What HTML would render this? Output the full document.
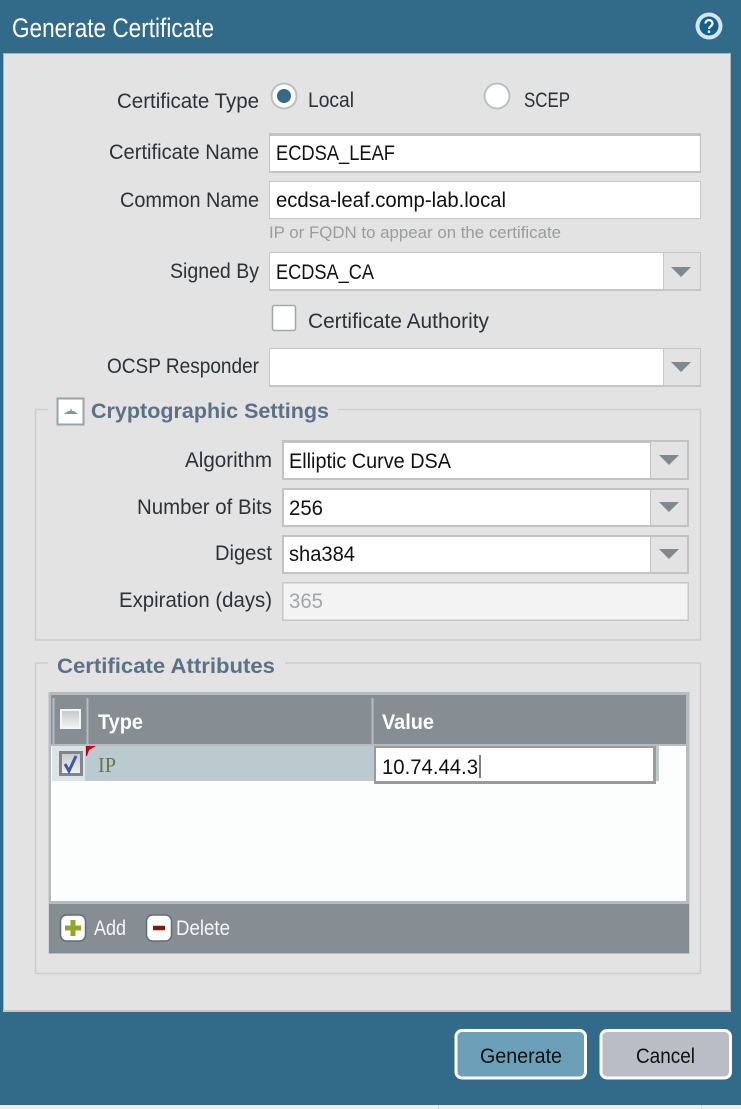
<!DOCTYPE html>
<html><head><meta charset="utf-8"><title>Generate Certificate</title>
<style>
html,body{margin:0;padding:0;width:741px;height:1109px;overflow:hidden;background:#326a89}
svg{display:block}
text{font-family:"Liberation Sans",sans-serif;font-size:21px;fill:#2c3238}
.v{fill:#111}
.h{font-weight:bold;fill:#5a7186}
</style></head><body>
<svg width="741" height="1109" viewBox="0 0 741 1109" xmlns="http://www.w3.org/2000/svg">
<defs><linearGradient id="g" x1="0" y1="0" x2="0" y2="1"><stop offset="0" stop-color="#c4c8cb"/><stop offset="1" stop-color="#f2f3f4"/></linearGradient></defs>
<rect width="741" height="1109" fill="#326a89"/>
<rect x="0" y="1105" width="741" height="4" fill="#eef0f0"/>
<path d="M438.500 1105V1109M701.500 1105V1109" stroke="#d5d8da"/>
<rect x="3" y="53" width="728" height="959" fill="#e3e3e3"/>
<path d="M3.500 1012V53.500H730.500V1012" fill="none" stroke="#a9b4ba"/>
<rect x="3" y="1010" width="728" height="2" fill="#c4c6c8"/>

<text x="12" y="37" style="font-size:27px;fill:#fff" textLength="202" lengthAdjust="spacingAndGlyphs">Generate Certificate</text>
<circle cx="709" cy="26" r="13.500" fill="#d6e4ec"/><circle cx="709" cy="26" r="9.500" fill="#14608f"/>
<path d="M705.500 23.500c0-4.500 7-4.500 7 0 0 2.800-3.500 2.800-3.500 5.500" fill="none" stroke="#fff" stroke-width="2.200"/><rect x="707.800" y="30.500" width="2.400" height="2.400" fill="#fff"/>

<text x="117" y="108" textLength="142" lengthAdjust="spacingAndGlyphs">Certificate Type</text>
<circle cx="284" cy="96" r="12.500" fill="#fff" stroke="#b9bfc3" stroke-width="2"/><circle cx="284" cy="96" r="7" fill="#326a89"/>
<text x="308" y="107" textLength="46" lengthAdjust="spacingAndGlyphs">Local</text>
<circle cx="497" cy="96" r="12.500" fill="#fff" stroke="#b9bfc3" stroke-width="2"/>
<text x="524" y="107" textLength="46" lengthAdjust="spacingAndGlyphs">SCEP</text>

<text x="109" y="159" textLength="150" lengthAdjust="spacingAndGlyphs">Certificate Name</text>
<rect x="269" y="133" width="432" height="40" fill="#c2c2c2"/><rect x="270" y="136" width="430" height="35" fill="#fff"/>
<text class="v" x="276" y="160" textLength="119" lengthAdjust="spacingAndGlyphs">ECDSA_LEAF</text>

<text x="120" y="207" textLength="139" lengthAdjust="spacingAndGlyphs">Common Name</text>
<rect x="269" y="181" width="432" height="38" fill="#c6c6c6"/><rect x="270" y="182" width="430" height="36" fill="#fff"/>
<text class="v" x="276" y="207" textLength="230" lengthAdjust="spacingAndGlyphs">ecdsa-leaf.comp-lab.local</text>
<text x="269" y="238" style="font-size:17px;fill:#9a9c9e" textLength="292" lengthAdjust="spacingAndGlyphs">IP or FQDN to appear on the certificate</text>

<text x="170" y="278" textLength="89" lengthAdjust="spacingAndGlyphs">Signed By</text>
<rect x="269" y="252" width="432" height="39" fill="#c6c6c6"/><rect x="270" y="253" width="393" height="36" fill="#fff"/>
<rect x="664" y="253" width="36" height="36" fill="#e3e3e3"/>
<path d="M671 267H691L681 277Z" fill="#7f898e"/>
<text class="v" x="276" y="279" textLength="98" lengthAdjust="spacingAndGlyphs">ECDSA_CA</text>

<rect x="272.500" y="305.500" width="23" height="25" rx="2" fill="#fff" stroke="#a3a8ab" stroke-width="1.500"/>
<text x="308" y="328" textLength="181" lengthAdjust="spacingAndGlyphs">Certificate Authority</text>

<text x="107" y="373" textLength="152" lengthAdjust="spacingAndGlyphs">OCSP Responder</text>
<rect x="269" y="348" width="432" height="39" fill="#c6c6c6"/><rect x="270" y="349" width="393" height="36" fill="#fff"/>
<rect x="664" y="349" width="36" height="36" fill="#e3e3e3"/>
<path d="M671 362H691L681 372Z" fill="#7f898e"/>

<!-- Cryptographic Settings -->
<path d="M48 409.500H35.500V640H700.500V409.500H338" fill="none" stroke="#cdcdcd" stroke-width="1.500"/>
<rect x="57.500" y="398.500" width="26" height="26" fill="#fff" stroke="#9aa3a9" stroke-width="2"/>
<path d="M64 414H78L74 411H72L71 408L70 411H68Z" fill="#8a9398"/>
<text class="h" x="91" y="418" textLength="238" lengthAdjust="spacingAndGlyphs">Cryptographic Settings</text>

<text x="185" y="467" textLength="87" lengthAdjust="spacingAndGlyphs">Algorithm</text>
<rect x="282" y="440" width="407" height="40" fill="#c2c2c2"/><rect x="284" y="443" width="366" height="35" fill="#fff"/>
<rect x="651" y="442" width="36" height="36" fill="#e3e3e3"/>
<path d="M659 455H679L669 465Z" fill="#7f898e"/>
<text class="v" x="289" y="468" textLength="162" lengthAdjust="spacingAndGlyphs">Elliptic Curve DSA</text>

<text x="137" y="514" textLength="135" lengthAdjust="spacingAndGlyphs">Number of Bits</text>
<rect x="282" y="488" width="407" height="39" fill="#c2c2c2"/><rect x="284" y="490" width="366" height="35" fill="#fff"/>
<rect x="651" y="490" width="36" height="35" fill="#e3e3e3"/>
<path d="M659 502H679L669 512Z" fill="#7f898e"/>
<text class="v" x="289" y="515" textLength="34" lengthAdjust="spacingAndGlyphs">256</text>

<text x="215" y="560" textLength="57" lengthAdjust="spacingAndGlyphs">Digest</text>
<rect x="282" y="535" width="407" height="39" fill="#c2c2c2"/><rect x="284" y="537" width="366" height="35" fill="#fff"/>
<rect x="651" y="537" width="36" height="35" fill="#e3e3e3"/>
<path d="M659 549H679L669 559Z" fill="#7f898e"/>
<text class="v" x="289" y="561" textLength="66" lengthAdjust="spacingAndGlyphs">sha384</text>

<text x="119" y="607" textLength="153" lengthAdjust="spacingAndGlyphs">Expiration (days)</text>
<rect x="282" y="582" width="407" height="39" fill="#c6c6c6"/><rect x="283.500" y="583.500" width="404" height="36" fill="#f3f3f3"/>
<text x="289" y="608" style="fill:#a3a6a8" textLength="34" lengthAdjust="spacingAndGlyphs">365</text>

<!-- Certificate Attributes -->
<path d="M48 663H35.500V973.500H700.500V663H285" fill="none" stroke="#cdcdcd" stroke-width="1.500"/>
<text class="h" x="57" y="673" textLength="218" lengthAdjust="spacingAndGlyphs">Certificate Attributes</text>

<rect x="48.500" y="692" width="641" height="262" fill="#b7bcc1"/>
<rect x="51" y="695" width="635" height="49" fill="#868e94"/>
<rect x="51" y="746" width="635" height="155" fill="#fcfefd"/>
<rect x="49" y="904" width="640" height="49" fill="#868e94"/>
<path d="M53.500 698V744M87.500 698V744M372.500 698V744" stroke="#b7bcc1" stroke-width="2"/>
<rect x="61" y="710" width="19" height="18" fill="url(#g)" stroke="#f4f5f5" stroke-width="2"/>
<text x="98" y="729" style="fill:#fff;font-weight:bold" textLength="45" lengthAdjust="spacingAndGlyphs">Type</text>
<text x="382" y="729" style="fill:#fff;font-weight:bold" textLength="52" lengthAdjust="spacingAndGlyphs">Value</text>

<rect x="85" y="746" width="286" height="35" fill="#bbcacf"/>
<rect x="52" y="746" width="33" height="35" fill="#dce4e7"/>
<rect x="371" y="746" width="288" height="35" fill="#bbcacf"/>
<rect x="60.500" y="752.500" width="21" height="22" fill="url(#g)" stroke="#7f878c" stroke-width="3"/>
<path d="M65 764L69 771L76 756" fill="none" stroke="#3d5a9e" stroke-width="3"/>
<path d="M86 746H96L89 750L87 756H86Z" fill="#c30012"/>
<text x="98" y="772" style="fill:#6a7350;font-family:'Liberation Serif',serif" textLength="18" lengthAdjust="spacingAndGlyphs">IP</text>
<rect x="374" y="746" width="282" height="38" fill="#9b9b9b"/><rect x="376" y="748" width="277" height="33" fill="#fff"/>
<text class="v" x="382" y="774" textLength="96" lengthAdjust="spacingAndGlyphs">10.74.44.3</text>
<path d="M480 755V778" stroke="#000" stroke-width="1"/>

<rect x="60.500" y="915" width="25" height="26" rx="6" fill="#fff" stroke="#5d6f7a" stroke-width="1.500"/>
<path d="M73 920V936M65 928H81" stroke="#8fa72a" stroke-width="5"/>
<text x="94" y="935" style="fill:#f3f6f7" textLength="32" lengthAdjust="spacingAndGlyphs">Add</text>
<rect x="146.500" y="915" width="25" height="26" rx="6" fill="#fff" stroke="#5d6f7a" stroke-width="1.500"/>
<path d="M153 928H165" stroke="#7a1e08" stroke-width="4.500"/>
<text x="176" y="935" style="fill:#f3f6f7" textLength="54" lengthAdjust="spacingAndGlyphs">Delete</text>

<rect x="456" y="1030.500" width="129.500" height="47.500" rx="6" fill="#6ca0b9" stroke="#fff" stroke-width="3"/>
<text class="v" x="480" y="1063" textLength="82" lengthAdjust="spacingAndGlyphs">Generate</text>
<rect x="601" y="1030.500" width="129.500" height="47.500" rx="6" fill="#babdc5" stroke="#fff" stroke-width="3"/>
<text class="v" x="636" y="1063" textLength="59" lengthAdjust="spacingAndGlyphs">Cancel</text>
</svg>
</body></html>
